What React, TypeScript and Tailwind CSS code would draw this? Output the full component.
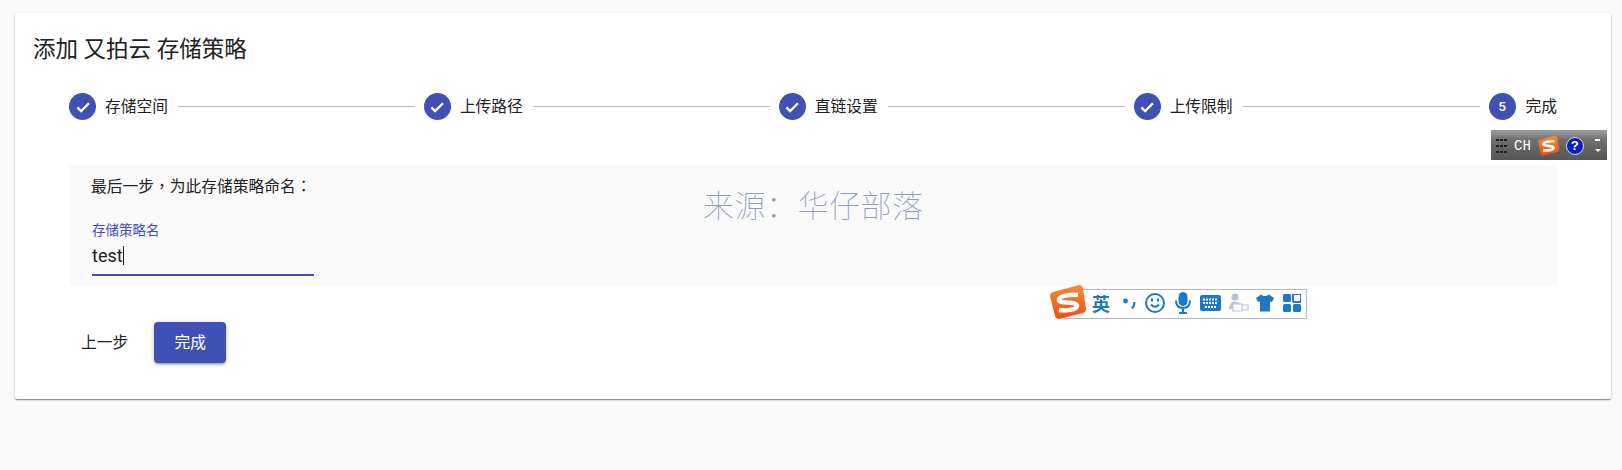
import React from "react";

function Check() {
  return (
    <span className="flex h-[27px] w-[27px] shrink-0 items-center justify-center rounded-full bg-[#3f51b5]">
      <svg width="18" height="18" viewBox="0 0 24 24" fill="none" stroke="#fff" strokeWidth="3">
        <path d="M4.5 12.5l5 5L20 7" />
      </svg>
    </span>
  );
}

function Step({ label, last, n }: { label: string; last?: boolean; n?: number }) {
  return (
    <div className={last ? "flex items-center" : "flex flex-1 items-center"}>
      {n ? (
        <span className="flex h-[27px] w-[27px] shrink-0 items-center justify-center rounded-full bg-[#3f51b5] text-[13.5px] font-medium text-white">
          {n}
        </span>
      ) : (
        <Check />
      )}
      <span className={last ? "ml-[10px] whitespace-nowrap text-[15.75px] leading-[27px] text-[#212121]" : "ml-[9px] whitespace-nowrap text-[15.75px] leading-[27px] text-[#212121]"}>{label}</span>
      {!last && <span className="ml-[10px] mr-[9px] h-px flex-1 bg-[#bdbdbd]" />}
    </div>
  );
}

function SogouS({ size, id }: { size: number; id: string }) {
  return (
    <svg width={size} height={size} viewBox="0 0 36 36">
      <defs>
        <linearGradient id={id} x1="0" y1="0" x2="0" y2="1">
          <stop offset="0" stopColor="#f58a3c" />
          <stop offset="1" stopColor="#f4500f" />
        </linearGradient>
      </defs>
      <path d="M3 8 L29 1 Q32 1 33 4 L36 25 Q36 28 33 29 L9 35 Q6 35 5 32 L0 12 Q0 9 3 8Z" fill={`url(#${id})`} />
      <path d="M28 11 C20 10 9 12 9 16 C9 20 27 17 27 22 C27 26 15 27 9 26" fill="none" stroke="#fff" strokeWidth="4.5" />
    </svg>
  );
}

function ImeBottom() {
  const c = "#1f77c9";
  return (
    <div className="absolute left-[1050px] top-[286px] flex h-[34px] w-[257px] items-center">
      <div className="absolute bottom-[1px] left-[14px] right-0 top-[3px] border border-[#b4b8c6] bg-white" />
      <div className="relative -mt-[2px]"><SogouS size={36} id="sg-b" /></div>
      <div className="relative flex items-center text-[#1f77c9]">
        <span className="ml-[6px] w-[18px] font-['Noto_Sans_CJK_SC',sans-serif] text-[18px] font-bold leading-none">英</span>
        <svg className="ml-[11px]" width="16" height="18" viewBox="0 0 16 18">
          <circle cx="4.5" cy="7" r="2.4" fill={c} />
          <path d="M13.5 8 Q13.5 12 11 14.5" fill="none" stroke={c} strokeWidth="2.2" />
        </svg>
        <svg className="ml-[7px]" width="22" height="22" viewBox="0 0 22 22" fill="none" stroke={c} strokeWidth="2">
          <circle cx="11" cy="11" r="9" />
          <path d="M7 12.5 Q11 17 15 12.5" />
          <path d="M8 6.5v3M14 6.5v3" />
        </svg>
        <svg className="ml-[8px]" width="18" height="22" viewBox="0 0 18 22" fill="none" stroke={c}>
          <rect x="5" y="0.5" width="8" height="13" rx="4" fill={c} />
          <path d="M2 8.5 Q2 16 9 16 Q16 16 16 8.5M9 16v4M5 21h8" strokeWidth="2" />
        </svg>
        <svg className="ml-[8px]" width="21" height="16" viewBox="0 0 21 16">
          <rect x="0" y="0" width="21" height="16" rx="2" fill={c} />
          <path d="M3 4.5h15M3 8h15M5 12h11" stroke="#fff" strokeWidth="1.8" strokeDasharray="2 1" />
        </svg>
        <svg className="ml-[6px]" width="22" height="22" viewBox="0 0 22 22">
          <circle cx="8" cy="5" r="3.6" fill="#b9c4d6" />
          <path d="M2 17 Q2 9.5 8 9.5 Q12 9.5 13 12 L6 12 L6 17Z" fill="#b9c4d6" />
          <path d="M6 12h9v7H6zM15 13h6v5h-6" fill="none" stroke="#b9c4d6" strokeWidth="1.2" />
        </svg>
        <svg className="ml-[7px]" width="18" height="18" viewBox="0 0 18 18">
          <path d="M5 0.5 Q9 3.5 13 0.5 L18 4 L16 8 L14 7.5 V17.5 H4 V7.5 L2 8 L0 4Z" fill={c} />
        </svg>
        <svg className="ml-[9px]" width="18" height="18" viewBox="0 0 18 18">
          <rect x="0" y="0" width="8" height="8" rx="1.5" fill={c} />
          <rect x="10" y="0" width="8" height="8" rx="1.5" fill="none" stroke={c} strokeWidth="2" />
          <rect x="0" y="10" width="8" height="8" rx="1.5" fill={c} />
          <rect x="10" y="10" width="8" height="8" rx="1.5" fill={c} />
        </svg>
      </div>
    </div>
  );
}

function ImeTop() {
  return (
    <div className="absolute left-[1491px] top-[130px] flex h-[30px] w-[116px] items-center border-t border-[#9a9a9a] bg-[linear-gradient(#9c9c9c,#6f6f6f_30%,#555_100%)]">
      <div className="ml-[5px] grid w-[11px] grid-cols-3 gap-x-[1px] gap-y-[4px]">
        {Array.from({ length: 9 }).map((_, i) => (
          <span key={i} className="h-[2px] w-[3px] bg-[#222]" />
        ))}
      </div>
      <span className="ml-[7px] font-['Liberation_Mono',monospace] text-[14px] leading-none text-white">CH</span>
      <span className="ml-[7px] flex"><SogouS size={21} id="sg-t" /></span>
      <span className="ml-[7px] flex h-[18px] w-[18px] items-center justify-center rounded-full border border-[#cfd4ff] bg-[#0b1fb5] font-['Liberation_Sans',sans-serif] text-[13px] font-bold leading-none text-white">?</span>
      <div className="ml-[11px] flex flex-col items-center gap-[8px]">
        <span className="h-[2px] w-[5px] bg-white" />
        <span className="h-0 w-0 border-x-[3px] border-t-[3px] border-x-transparent border-t-white" />
      </div>
    </div>
  );
}

export default function App() {
  return (
    <div className="relative h-[470px] w-full overflow-hidden bg-[#fafafa] pl-[15px] pr-[11px] pt-[13px] font-['Roboto','Noto_Sans_CJK_SC',sans-serif]">
      <div className="h-[386px] rounded-[2px] bg-white pt-[20px] shadow-[0_1px_3px_rgba(0,0,0,0.2),0_1px_1px_rgba(0,0,0,0.2),0_2px_1px_-1px_rgba(0,0,0,0.2)]">
        <h1 className="pl-[18px] text-[22.5px] font-normal leading-[32px] text-[#212121]">添加 又拍云 存储策略</h1>
        <div className="mt-[28px] flex items-center pl-[54px] pr-[54px]">
          <Step label="存储空间" />
          <Step label="上传路径" />
          <Step label="直链设置" />
          <Step label="上传限制" />
          <Step label="完成" n={5} last />
        </div>
        <div className="ml-[54px] mr-[54px] mt-[45px] h-[121px] bg-[#fafafa] pl-[22px] pt-[9px]">
          <p className="text-[15.75px] leading-[24px] text-[#212121]">
            最后一步<span className="font-['Noto_Sans_CJK_TC']">，</span>为此存储策略命名<span className="font-['Noto_Sans_CJK_TC']">：</span>
          </p>
          <div className="ml-[1px] mt-[23px] w-[222px]">
            <label className="block text-[13.5px] leading-[16px] text-[#3f51b5]">存储策略名</label>
            <div className="flex h-[38px] items-center border-b-2 border-[#3f51b5] pb-[1px] text-[18px] text-[#212121]">
              test<span className="h-[19px] w-px bg-[#212121]" />
            </div>
          </div>
        </div>
        <div className="mt-[36px] flex items-center pl-[66px]">
          <button className="text-[15.75px] text-[#212121]">上一步</button>
          <button className="ml-[26px] h-[41px] w-[72px] rounded-[4px] bg-[#3f51b5] text-[15.75px] text-white shadow-[0_1px_5px_rgba(0,0,0,0.2),0_2px_2px_rgba(0,0,0,0.14),0_3px_1px_-2px_rgba(0,0,0,0.12)]">完成</button>
        </div>
      </div>
      <div className="absolute left-[703px] top-[186px] text-[31px] font-thin leading-[42px] tracking-[0.5px] text-[#8f9bb8]">来源：华仔部落</div>
      <ImeTop />
      <ImeBottom />
    </div>
  );
}
